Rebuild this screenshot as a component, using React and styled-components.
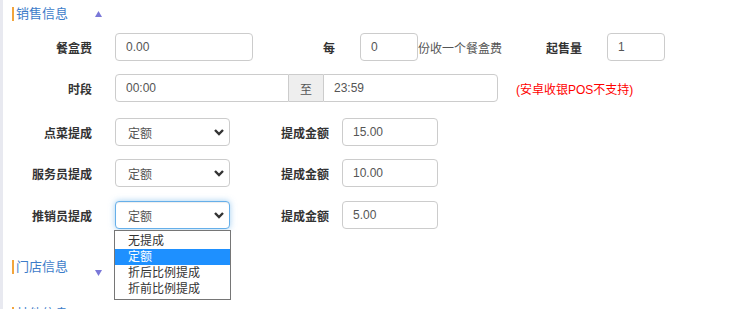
import React from 'react'
import styled, { createGlobalStyle } from 'styled-components';

const GlobalStyle = createGlobalStyle`
    html, body {
        margin: 0;
        padding: 0;
        background: #fff;
    }
    body {
        font-family: "Liberation Sans", "Noto Sans CJK SC", sans-serif;
        font-size: 12px;
        color: #333;
    }
`

const Page = styled.div`
    display: flex;
    width: 730px;
    height: 309px;
    overflow: hidden;
`

const Strip = styled.div`
    width: 3px;
    flex: none;
    background: #e8e9f0;
`

const Content = styled.div`
    flex: 1;
    padding-top: 4px;
`

const SectionHeader = styled.div`
    display: flex;
    align-items: center;
    height: 20px;
    padding-left: 9px;
    margin-bottom: ${p => p.$after || 0}px;
`

const Title = styled.div`
    width: 79px;
    border-left: 2px solid #f3a53c;
    padding-left: 2px;
    line-height: 14px;
    font-size: 13px;
    color: #3d7cc9;
`

const Toggle = styled.svg`
    width: 7px;
    height: 6px;
    margin-top: ${p => p.$down ? 12 : 0}px;
    fill: #7a78d8;
`

const Row = styled.div`
    display: flex;
    align-items: center;
    height: 28px;
    margin-bottom: ${p => p.$after || 0}px;
`

const Label = styled.div`
    width: ${p => p.$w}px;
    margin-right: ${p => p.$mr}px;
    flex: none;
    text-align: right;
    font-weight: bold;
    color: #333;
    white-space: nowrap;
`

const Input = styled.input`
    box-sizing: border-box;
    width: ${p => p.$w}px;
    height: 28px;
    padding: 0 10px;
    border: 1px solid #ccc;
    border-radius: ${p => p.$radius || '4px'};
    font: 12px "Liberation Sans", "Noto Sans CJK SC", sans-serif;
    color: #555;
    background: #fff;
    outline: none;
`

const Suffix = styled.div`
    width: ${p => p.$w}px;
    flex: none;
    color: #555;
    white-space: nowrap;
`

const InputGroup = styled.div`
    display: flex;
    height: 28px;
`

const Addon = styled.div`
    box-sizing: border-box;
    width: 34px;
    display: flex;
    align-items: center;
    justify-content: center;
    border: 1px solid #ccc;
    border-left: none;
    border-right: none;
    background: #eee;
    color: #555;
`

const Note = styled.div`
    margin-left: 18px;
    color: #f00;
`

const SelectWrap = styled.div`
    position: relative;
    flex: none;
`

const SelectBox = styled.div`
    box-sizing: border-box;
    width: 115px;
    height: 28px;
    display: flex;
    align-items: center;
    justify-content: space-between;
    padding: 0 5px 0 12px;
    border: 1px solid ${p => p.$focus ? '#66afe9' : '#ccc'};
    border-radius: 4px;
    box-shadow: ${p => p.$focus ? 'inset 0 1px 1px rgba(0,0,0,.075), 0 0 6px rgba(102,175,233,.6)' : 'none'};
    color: #555;
    background: #fff;
`

const Chevron = styled.svg`
    width: 10px;
    height: 7px;
    fill: none;
    stroke: #333;
    stroke-width: 2.4;
`

const OptionList = styled.ul`
    position: absolute;
    top: 29px;
    left: -1px;
    width: 117px;
    box-sizing: border-box;
    margin: 0;
    padding: 2px 0 2px;
    list-style: none;
    border: 1px solid #767676;
    background: #fff;
    z-index: 2;
`

const OptionItem = styled.li`
    height: 16px;
    line-height: 16px;
    padding-left: 13px;
    color: ${p => p.$active ? '#fff' : '#333'};
    background: ${p => p.$active ? '#1e90ff' : 'transparent'};
`

const Body = styled.div`
    margin-bottom: ${p => p.$after}px;
`

const options = ['无提成', '定额', '折后比例提成', '折前比例提成'];

function Select({ value, focus, open }) {
    return (
        <SelectWrap>
            <SelectBox $focus={focus}>
                <span>{value}</span>
                <Chevron viewBox="0 0 10 7">
                    <polyline points="1,1 5,5 9,1" />
                </Chevron>
            </SelectBox>
            {open && (
                <OptionList>
                    {options.map(o => (
                        <OptionItem key={o} $active={o === value}>{o}</OptionItem>
                    ))}
                </OptionList>
            )}
        </SelectWrap>
    )
}

function Header({ title, down, after }) {
    return (
        <SectionHeader $after={after}>
            <Title>{title}</Title>
            <Toggle viewBox="0 0 7 6" $down={down}>
                {down ? <polygon points="0,0 7,0 3.5,6" /> : <polygon points="0,6 7,6 3.5,0" />}
            </Toggle>
        </SectionHeader>
    )
}

const commissions = [
    { name: '点菜提成', amount: '15.00' },
    { name: '服务员提成', amount: '10.00' },
    { name: '推销员提成', amount: '5.00', open: true },
];

export default function App() {
    return (
        <Page>
            <GlobalStyle />
            <Strip />
            <Content>
                <Header title="销售信息" after={9} />
                <Body $after={28}>
                    <Row $after={13}>
                        <Label $w={89} $mr={23}>餐盒费</Label>
                        <Input $w={138} defaultValue="0.00" />
                        <Label $w={82} $mr={25}>每</Label>
                        <Input $w={58} defaultValue="0" />
                        <Suffix $w={84}>份收一个餐盒费</Suffix>
                        <Label $w={80} $mr={25}>起售量</Label>
                        <Input $w={58} defaultValue="1" />
                    </Row>
                    <Row $after={16}>
                        <Label $w={89} $mr={23}>时段</Label>
                        <InputGroup>
                            <Input $w={174} $radius="4px 0 0 4px" defaultValue="00:00" />
                            <Addon>至</Addon>
                            <Input $w={175} $radius="0 4px 4px 0" defaultValue="23:59" />
                        </InputGroup>
                        <Note>(安卓收银POS不支持)</Note>
                    </Row>
                    {commissions.map((c, i) => (
                        <Row key={c.name} $after={i < 2 ? 13 + i : 0}>
                            <Label $w={89} $mr={23}>{c.name}</Label>
                            <Select value="定额" focus={c.open} open={c.open} />
                            <Label $w={99} $mr={13}>提成金额</Label>
                            <Input $w={96} defaultValue={c.amount} />
                        </Row>
                    ))}
                </Body>
                <Header title="门店信息" down after={27} />
                <Header title="其他信息" down />
            </Content>
        </Page>
    )
}
